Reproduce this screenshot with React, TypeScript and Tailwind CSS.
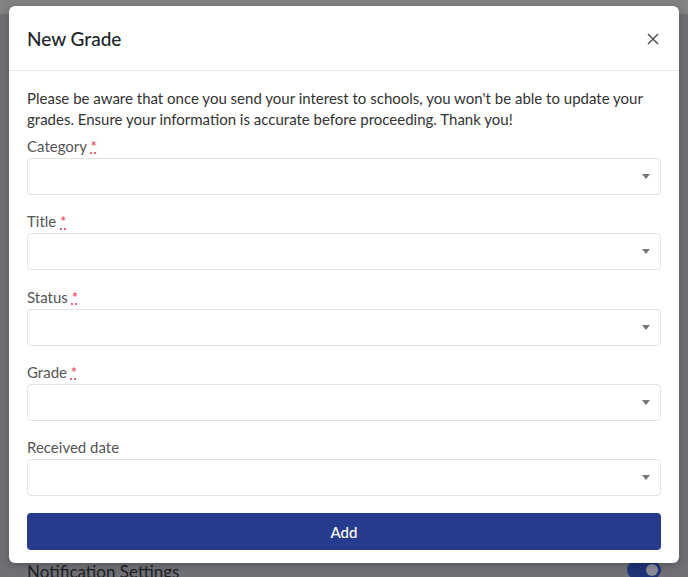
import React from "react";

const fields = [
  { label: "Category", required: true },
  { label: "Title", required: true },
  { label: "Status", required: true },
  { label: "Grade", required: true },
  { label: "Received date", required: false },
];

function SelectField({ label, required }: { label: string; required: boolean }) {
  return (
    <div className="flex flex-col gap-[1px]">
      <label className="block text-[15px] leading-[21px] text-[#555]">
        {label}
        {required && (
          <>
            {" "}
            <abbr className="text-[#dc3545] underline decoration-dotted" title="required">
              *
            </abbr>
          </>
        )}
      </label>
      <div className="flex h-[37px] items-center justify-end rounded-[4px] border border-[#e3e3e3] bg-white pr-[10px]">
        <span className="h-0 w-0 border-x-[4px] border-t-[5px] border-x-transparent border-t-[#777]" />
      </div>
    </div>
  );
}

export default function App() {
  return (
    <div
      className="relative flex h-[577px] w-[688px] flex-col overflow-hidden bg-[#707176]"
      style={{ fontFamily: 'Lato, "Noto Sans", sans-serif' }}
    >
      {/* page beneath the backdrop */}
      <div className="h-[14px] bg-[#828282]" />
      <div className="mt-auto flex items-start justify-between px-[27px]">
        <span className="translate-y-[5px] text-[17px] leading-[20px] text-[#1f2024]">Notification Settings</span>
        <span className="relative h-[18px] w-[34px] translate-y-[4px] rounded-full bg-[#1f3478]">
          <span className="absolute right-[3px] top-[3px] h-[12px] w-[12px] rounded-full bg-[#8a8d99]" />
        </span>
      </div>

      <div className="absolute left-[9px] top-[6px] w-[670px] rounded-[6px] bg-white shadow-[0_2px_8px_rgba(0,0,0,0.25)]">
        <div className="flex h-[65px] items-center justify-between border-b border-[#e9e9e9] px-[18px] pt-[2px]">
          <h2 className="text-[19px] font-medium text-[#212529]">New Grade</h2>
          <button type="button" className="mr-[2px] text-[#555]" aria-label="Close">
            <svg width="12" height="12" viewBox="0 0 12 12" fill="none" stroke="currentColor" strokeWidth="1.5">
              <path d="M1 1l10 10M11 1L1 11" />
            </svg>
          </button>
        </div>
        <div className="flex flex-col px-[18px] pb-[13px] pt-[17px]">
          <p className="mb-[6px] text-[15px] leading-[21px] text-[#333]">
            Please be aware that once you send your interest to schools, you won't be able to update your grades.
            Ensure your information is accurate before proceeding. Thank you!
          </p>
          <div className="flex flex-col gap-[16.25px]">
            {fields.map((f) => (
              <SelectField key={f.label} label={f.label} required={f.required} />
            ))}
            <button
              type="button"
              className="mt-[1px] h-[37px] w-full rounded-[4px] bg-[#273b8e] text-[15px] font-medium text-white"
            >
              Add
            </button>
          </div>
        </div>
      </div>
    </div>
  );
}
